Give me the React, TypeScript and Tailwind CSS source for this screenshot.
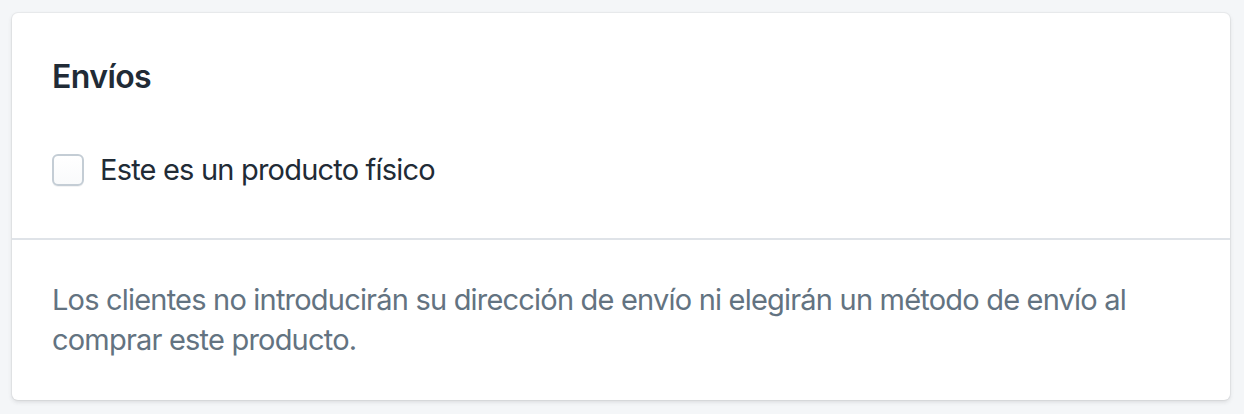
export default function App() {
  return (
    <div className="min-h-[414px] w-full bg-[#f4f6f8] pt-[13px] pl-3 pr-[14px] pb-3" style={{ fontFamily: 'Inter, "Noto Sans", sans-serif' }}>
      <div className="rounded-[6px] bg-white shadow-[0_0_0_1px_rgba(63,63,68,0.05),0_2px_4px_0_rgba(63,63,68,0.15)]">
        <div className="px-10 pt-10 pb-12">
          <h2 className="text-[32px] font-semibold leading-[48px] tracking-[-0.6px] text-[#212b36]">Envíos</h2>
          <label className="mt-[49px] flex h-10 items-center gap-4">
            <span className="h-8 w-8 rounded-[6px] border-2 border-[#c4cdd5] bg-gradient-to-b from-white to-[#f9fafb] shadow-[0_1px_0_0_rgba(22,29,37,0.05)]" />
            <span className="text-[29px] leading-10 tracking-[-0.8px] text-[#212b36]">Este es un producto físico</span>
          </label>
        </div>
        <div className="border-t-2 border-[#dfe3e8] px-10 py-10">
          <p className="text-[29px] leading-10 tracking-[-0.8px] text-[#637381]">
            Los clientes no introducirán su dirección de envío ni elegirán un método de envío al comprar este producto.
          </p>
        </div>
      </div>
    </div>
  );
}
